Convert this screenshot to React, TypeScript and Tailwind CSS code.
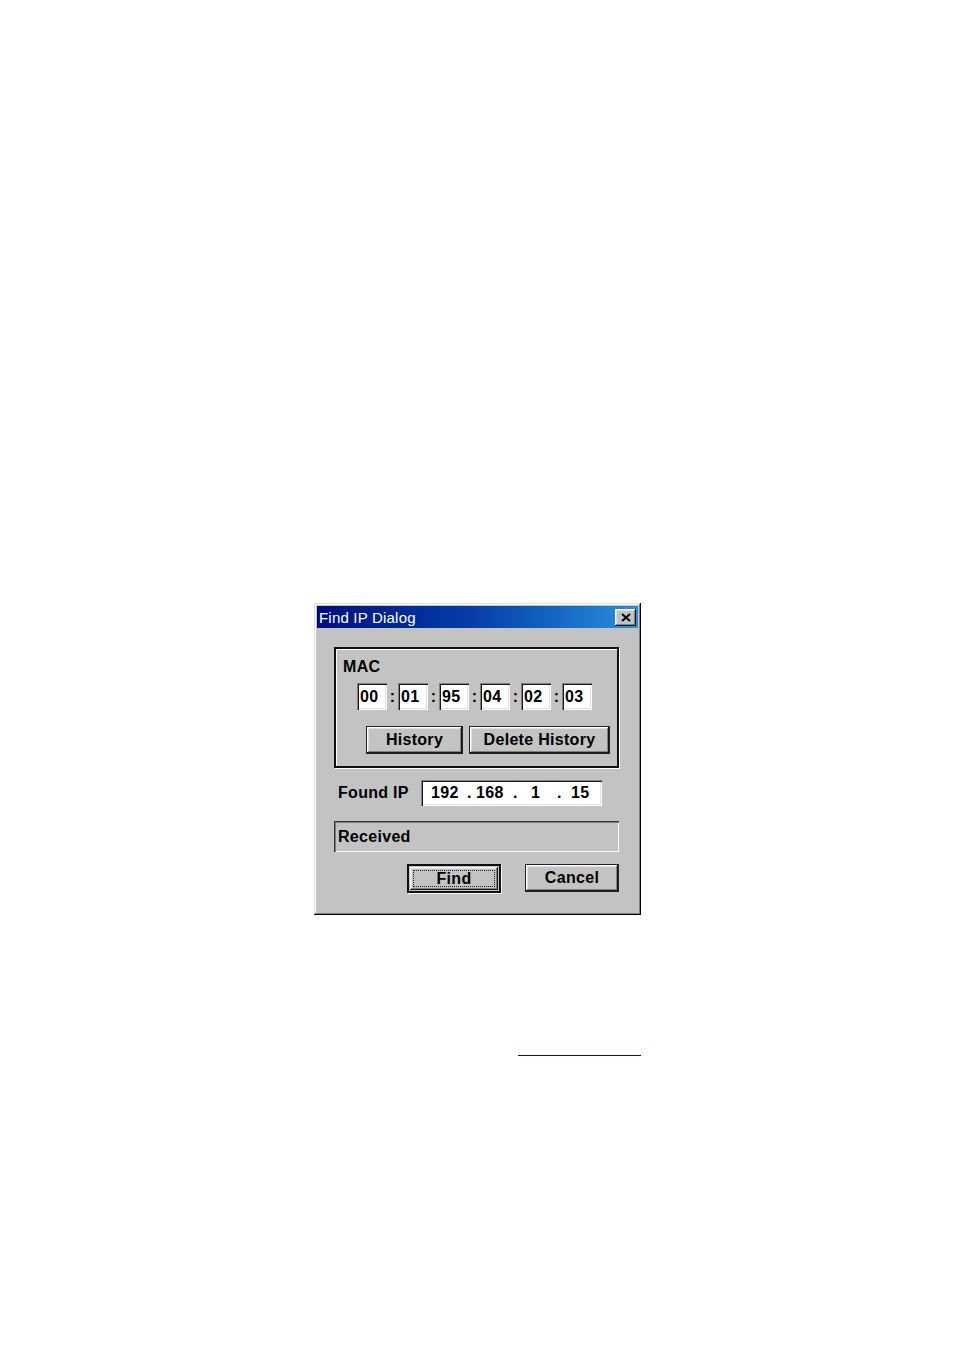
import React from "react";

const font = { fontFamily: '"Liberation Sans", Arial, sans-serif' };

const raised =
  "shadow-[inset_-1px_-1px_#1a1a1a,inset_1px_1px_#ffffff,inset_-2px_-2px_#808080,inset_2px_2px_#dfdfdf]";
const sunken =
  "shadow-[inset_1px_1px_#808080,inset_2px_2px_#1a1a1a,inset_-1px_-1px_#ffffff,inset_-2px_-2px_#dfdfdf]";

const txt = "text-[16px] font-bold text-black tracking-[0.3px]";

function MacField({ value }: { value: string }) {
  return (
    <div className={`w-[30px] h-[27px] bg-white ${sunken} flex items-center pl-[3px] ${txt}`}>
      {value}
    </div>
  );
}

function Btn({ label, w, focus }: { label: string; w: string; focus?: boolean }) {
  if (focus) {
    return (
      <div className={`${w} h-[29px] bg-[#c3c3c3] border-2 border-[#111] shadow-[1px_1px_#ffffff] p-[1px]`}>
        <div className={`h-full ${raised} p-[3px]`}>
          <div className={`h-full border border-dotted border-[#222] flex items-center justify-center ${txt}`}>
            {label}
          </div>
        </div>
      </div>
    );
  }
  return (
    <div
      className={`${w} h-[28px] bg-[#c3c3c3] border border-[#222] shadow-[1px_1px_#ffffff] ${raised} flex items-center justify-center ${txt}`}
    >
      {label}
    </div>
  );
}

export default function App() {
  const mac = ["00", "01", "95", "04", "02", "03"];
  return (
    <div className="min-h-[1351px] bg-white" style={font}>
      <div className="pt-[603px] pl-[314px]">
        <div
          className={`w-[327px] h-[312px] bg-[#c3c3c3] p-[3px] shadow-[inset_-1px_-1px_#000000,inset_1px_1px_#dfdfdf,inset_-2px_-2px_#808080,inset_2px_2px_#ffffff]`}
        >
          {/* title bar */}
          <div className="h-[22px] bg-gradient-to-r from-[#000a80] via-[#0a3fa8] to-[#2a90dc] flex items-center justify-between pl-[2px] pr-[2px]">
            <span className="text-white text-[15px] leading-none tracking-[0.2px]">Find IP Dialog</span>
            <div className={`w-[21px] h-[17px] bg-[#c3c3c3] ${raised} flex items-center justify-center`}>
              <svg width="10" height="9" viewBox="0 0 10 9">
                <path d="M1 1 L9 8 M9 1 L1 8" stroke="#000" strokeWidth="2" />
              </svg>
            </div>
          </div>

          <div className="pl-[17px]">
            {/* MAC group */}
            <div className="mt-[19px] w-[285px] h-[121px] border-2 border-[#111] shadow-[1px_1px_#ffffff,inset_1px_1px_#ffffff] pl-[7px] pt-[8px]">
              <div className={`${txt} leading-[19px]`}>MAC</div>
              <div className="mt-[7px] ml-[14px] flex items-center">
                {mac.map((m, i) => (
                  <React.Fragment key={m + i}>
                    {i > 0 && <span className={`w-[11px] text-center ${txt}`}>:</span>}
                    <MacField value={m} />
                  </React.Fragment>
                ))}
              </div>
              <div className="mt-[16px] ml-[23px] flex gap-[6px]">
                <Btn label="History" w="w-[97px]" />
                <Btn label="Delete History" w="w-[141px]" />
              </div>
            </div>

            {/* Found IP */}
            <div className="mt-[12px] flex items-center">
              <span className={`ml-[4px] w-[83px] ${txt}`}>Found IP</span>
              <div className={`w-[181px] h-[26px] bg-white ${sunken} flex items-center pl-[10px] ${txt}`}>
                <span className="w-[36px]">192</span>
                <span className="w-[9px]">.</span>
                <span className="w-[37px]">168</span>
                <span className="w-[18px]">.</span>
                <span className="w-[26px]">1</span>
                <span className="w-[14px]">.</span>
                <span>15</span>
              </div>
            </div>

            {/* status */}
            <div className={`mt-[15px] w-[285px] h-[31px] bg-[#c3c3c3] shadow-[inset_1px_1px_#333333,inset_2px_2px_#808080,inset_-1px_-1px_#ffffff] flex items-center pl-[4px] ${txt}`}>
              Received
            </div>

            {/* buttons */}
            <div className="mt-[12px] flex justify-end w-[285px] gap-[24px]">
              <Btn label="Find" w="w-[94px]" focus />
              <Btn label="Cancel" w="w-[94px]" />
            </div>
          </div>
        </div>

        <div className="mt-[140px] ml-[204px] w-[123px] h-px bg-[#0000dd]" />
      </div>
    </div>
  );
}
